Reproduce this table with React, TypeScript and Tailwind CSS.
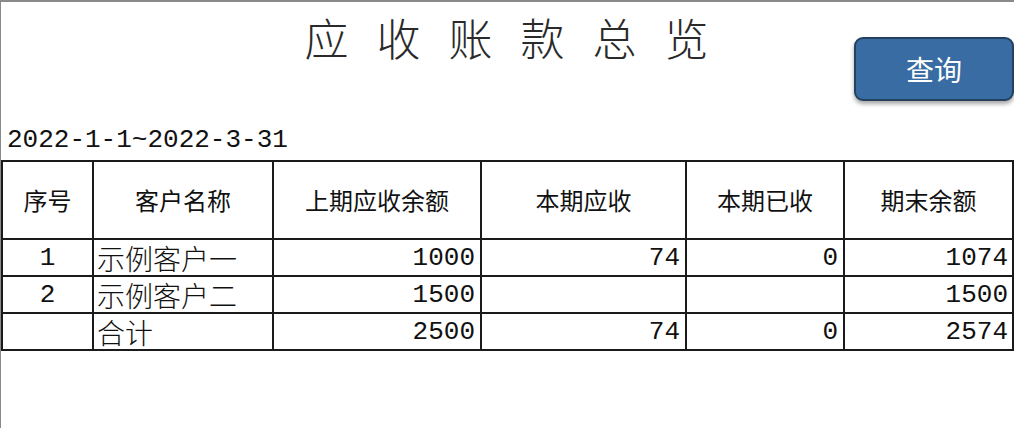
const rows = [
  { no: '1', name: '示例客户一', prev: '1000', cur: '74', paid: '0', end: '1074' },
  { no: '2', name: '示例客户二', prev: '1500', cur: '', paid: '', end: '1500' },
  { no: '', name: '合计', prev: '2500', cur: '74', paid: '0', end: '2574' },
]

const cjk = "font-['Noto_Sans_CJK_SC',sans-serif]"
const mono = "font-['Liberation_Mono','Noto_Sans_CJK_SC',monospace]"

function App() {
  return (
    <div className="w-[1014px] h-[428px] bg-white border-t-2 border-l border-[#8a8a8a] overflow-hidden">
      {/* header */}
      <div className="grid grid-cols-[1fr_auto_1fr] h-[118px]">
        <div />
        <h1 className={`${cjk} text-[44px] leading-none tracking-[28px] text-[#2a2a2a] font-light pt-[13px] pl-[26px]`}>
          应收账款总览
        </h1>
        <div className="flex justify-end items-start pt-[35px]">
          <button className={`${cjk} w-[160px] h-[64px] rounded-[9px] bg-[#386ca2] border-2 border-[#24415f] text-white text-[28px] leading-none shadow-[0_3px_4px_rgba(0,0,0,0.35)]`}>
            查询
          </button>
        </div>
      </div>

      {/* date range */}
      <div className={`${mono} h-[40px] pl-[6px] pt-[4px] text-[26px] leading-[32px] text-[#111]`}>
        2022-1-1~2022-3-31
      </div>

      <table className="table-fixed border-collapse w-[1011px] text-[#111]">
        <colgroup>
          <col className="w-[91px]" />
          <col className="w-[180px]" />
          <col className="w-[208px]" />
          <col className="w-[205px]" />
          <col className="w-[158px]" />
          <col className="w-[169px]" />
        </colgroup>
        <thead>
          <tr className={`${cjk} h-[78px] text-[24px]`}>
            {['序号', '客户名称', '上期应收余额', '本期应收', '本期已收', '期末余额'].map((h) => (
              <th key={h} className="border-2 border-[#1a1a1a] font-normal text-center">
                {h}
              </th>
            ))}
          </tr>
        </thead>
        <tbody>
          {rows.map((r, i) => (
            <tr key={i} className={`h-[37px] text-[26px] leading-none ${mono}`}>
              <td className="border-2 border-[#1a1a1a] text-center">{r.no}</td>
              <td className={`border-2 border-[#1a1a1a] pl-[3px] text-[28px] leading-[30px] ${cjk} font-light`}>{r.name}</td>
              <td className="border-2 border-[#1a1a1a] text-right pr-[5px]">{r.prev}</td>
              <td className="border-2 border-[#1a1a1a] text-right pr-[5px]">{r.cur}</td>
              <td className="border-2 border-[#1a1a1a] text-right pr-[5px]">{r.paid}</td>
              <td className="border-2 border-[#1a1a1a] text-right pr-[4px]">{r.end}</td>
            </tr>
          ))}
        </tbody>
      </table>
    </div>
  )
}

export default App
